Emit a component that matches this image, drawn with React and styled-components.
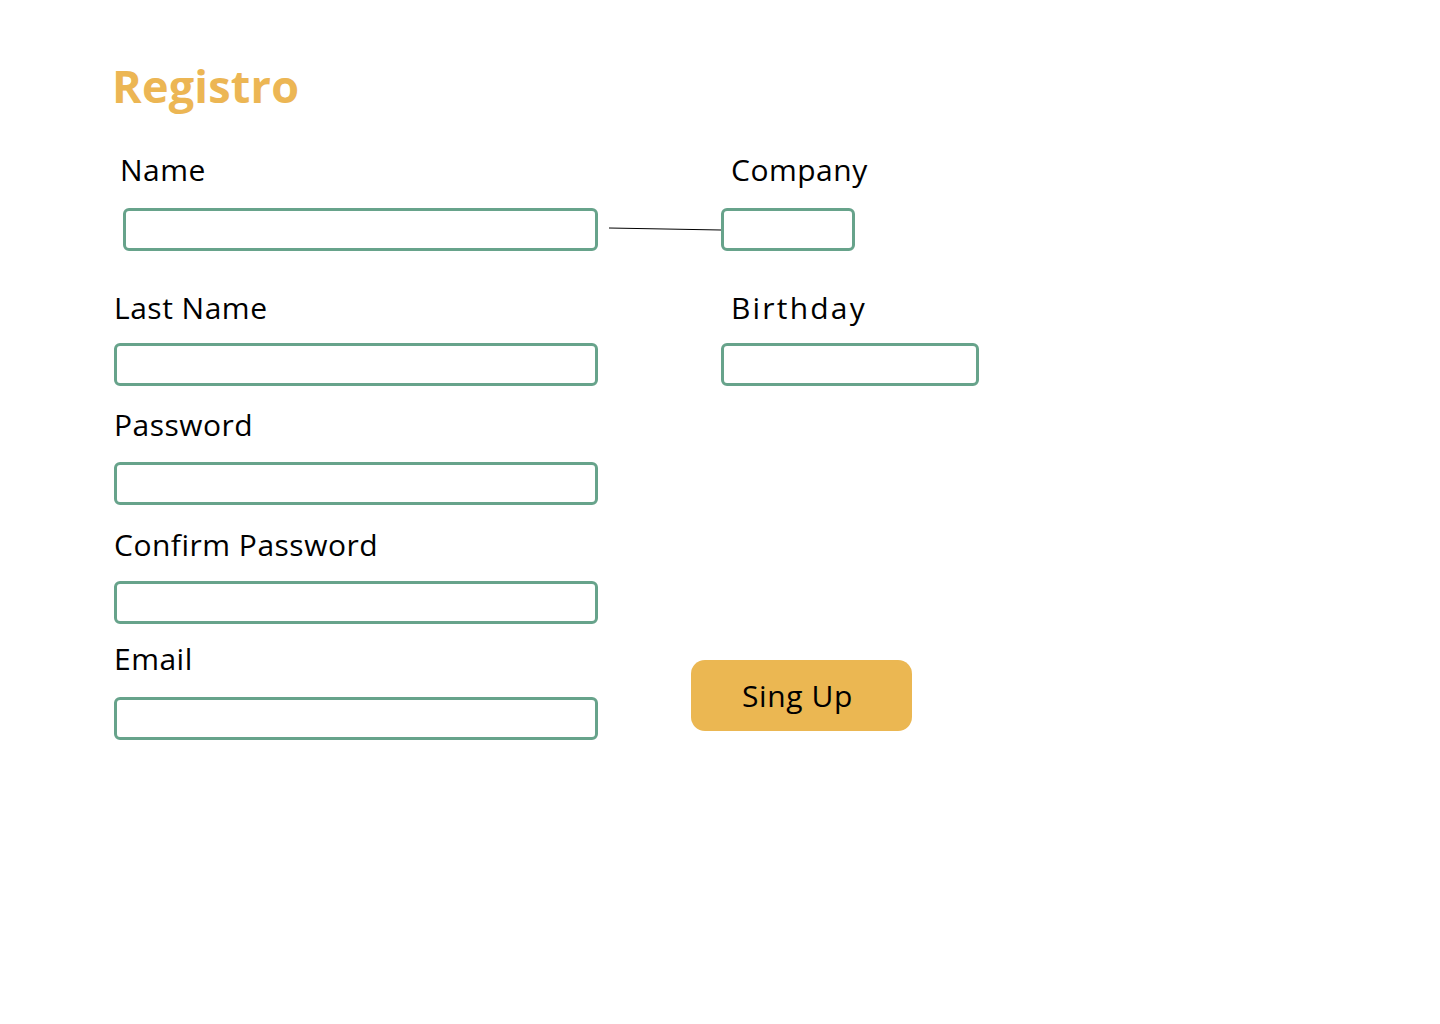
import React from "react";
import styled, { createGlobalStyle } from "styled-components";

const GlobalStyle = createGlobalStyle`
  html, body { margin: 0; padding: 0; background: #ffffff; }
  body { font-family: "Open Sans", "Noto Sans", "Liberation Sans", sans-serif; color: #000; }
  * { box-sizing: border-box; }
`;

const Page = styled.main`
  width: 1440px;
  min-height: 1024px;
  padding: 59px 0 0 112px;
`;

const Title = styled.h1`
  margin: 0;
  font-size: 45px;
  line-height: 54px;
  font-weight: 700;
  color: #ecb654;
  letter-spacing: 0.2px;
`;

const Form = styled.form`
  display: flex;
  flex-direction: column;
  margin-left: 2px;
`;

const Row = styled.div`
  display: flex;
  align-items: flex-start;
  margin-top: ${(p) => p.$top}px;
`;

const LeftCol = styled.div`
  width: 484px;
  flex: none;
`;

const RightCol = styled.div`
  margin-left: ${(p) => (p.$offset !== undefined ? p.$offset : 123)}px;
  flex: none;
`;

const Field = styled.div`
  display: flex;
  flex-direction: column;
`;

const Label = styled.label`
  display: block;
  font-size: 30px;
  line-height: 34px;
  padding-top: 1px;
  height: 34px;
  font-weight: 400;
  letter-spacing: ${(p) => (p.$wide ? 2.2 : 0.5)}px;
  padding-left: ${(p) => p.$indent || 0}px;
  white-space: nowrap;
`;

const Input = styled.input`
  display: block;
  margin-top: ${(p) => p.$gap || 21}px;
  margin-left: ${(p) => p.$indent || 0}px;
  width: ${(p) => p.$w}px;
  height: 43px;
  border: 3px solid #67a38b;
  border-radius: 6px;
  background: #fff;
  outline: none;
  padding: 0 10px;
  font: inherit;
  font-size: 18px;
`;

const Connector = styled.svg`
  flex: none;
  margin-left: 11px;
  margin-top: 75px;
  display: block;
`;

const Button = styled.button`
  margin-top: 19px;
  width: 221px;
  height: 71px;
  border: none;
  border-radius: 14px;
  background: #ebb752;
  color: #000;
  font-family: inherit;
  font-size: 30px;
  font-weight: 400;
  letter-spacing: 0.6px;
  padding: 0;
  text-indent: -8px;
  cursor: pointer;
`;

export default function App() {
  return (
    <>
      <GlobalStyle />
      <Page>
        <Title>Registro</Title>
        <Form onSubmit={(e) => e.preventDefault()}>
          <Row $top={39}>
            <LeftCol>
              <Field>
                <Label $indent={6}>Name</Label>
                <Input $indent={9} $w={475} $gap={22} />
              </Field>
            </LeftCol>
            <Connector width="112" height="5" viewBox="0 0 112 5">
              <line x1="0" y1="1" x2="112" y2="3" stroke="#000" strokeWidth="1" />
            </Connector>
            <RightCol $offset={0}>
              <Field>
                <Label $indent={10}>Company</Label>
                <Input $w={134} $gap={22} />
              </Field>
            </RightCol>
          </Row>
          <Row $top={39}>
            <LeftCol>
              <Field>
                <Label>Last Name</Label>
                <Input $w={484} $gap={19} />
              </Field>
            </LeftCol>
            <RightCol>
              <Field>
                <Label $indent={10} $wide>Birthday</Label>
                <Input $w={258} $gap={19} />
              </Field>
            </RightCol>
          </Row>
          <Row $top={21}>
            <LeftCol>
              <Field>
                <Label>Password</Label>
                <Input $w={484} type="password" />
              </Field>
            </LeftCol>
          </Row>
          <Row $top={22}>
            <LeftCol>
              <Field>
                <Label>Confirm Password</Label>
                <Input $w={484} $gap={20} type="password" />
              </Field>
            </LeftCol>
          </Row>
          <Row $top={17}>
            <LeftCol>
              <Field>
                <Label>Email</Label>
                <Input $w={484} $gap={22} type="email" />
              </Field>
            </LeftCol>
            <RightCol $offset={93}>
              <Button type="submit">Sing Up</Button>
            </RightCol>
          </Row>
        </Form>
      </Page>
    </>
  );
}
